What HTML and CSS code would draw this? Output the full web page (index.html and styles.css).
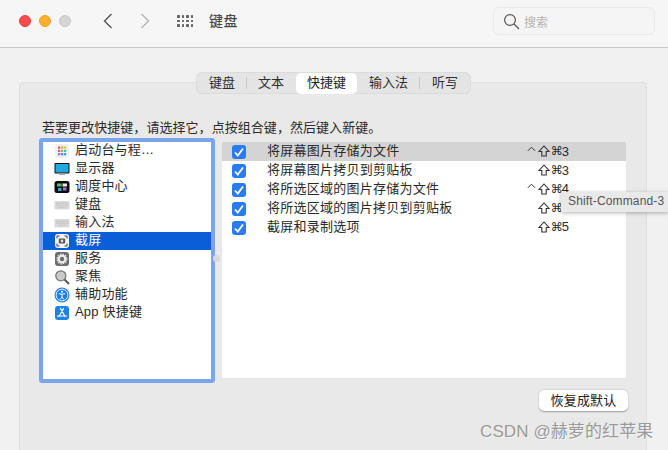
FILE: index.html
```html
<!DOCTYPE html>
<html lang="zh">
<head>
<meta charset="utf-8">
<title>键盘</title>
<link rel="stylesheet" href="styles.css">
</head>
<body>
<div class="window">
  <header class="titlebar">
    <div class="lights"><i class="light red"></i><i class="light amber"></i><i class="light grey"></i></div>
    <svg class="nav back" viewBox="0 0 12 18"><path d="M9.500 2 2.500 9l7 7"/></svg>
    <svg class="nav forward" viewBox="0 0 12 18"><path d="M2.500 2l7 7-7 7"/></svg>
    <div class="grid-btn"><i></i><i></i><i></i><i></i><i></i><i></i><i></i><i></i><i></i><i></i><i></i><i></i></div>
    <div class="title">键盘</div>
    <div class="search">
      <svg viewBox="0 0 17 17"><circle cx="7" cy="7" r="5.400"/><path d="M11 11l5 5"/></svg>
      <span>搜索</span>
    </div>
  </header>
  <main class="content">
    <nav class="tabs">
      <span class="tab first">键盘</span><i class="sep"></i>
      <span class="tab second">文本</span>
      <span class="tab active">快捷键</span>
      <span class="tab fourth">输入法</span><i class="sep"></i>
      <span class="tab">听写</span>
    </nav>
    <section class="panel">
      <p class="hint">若要更改快捷键，请选择它，点按组合键，然后键入新键。</p>
      <div class="columns">
        <ul class="list">
          <li><svg class="ic" viewBox="0 0 16 16"><rect x="1" y="1" width="14" height="14" rx="3" fill="#f1f0f0"/><rect x="4" y="3.500" width="2.200" height="2.200" fill="#e8504a"/><rect x="7" y="3.500" width="2.200" height="2.200" fill="#f0a33c"/><rect x="10" y="3.500" width="2.200" height="2.200" fill="#e4c23c"/><rect x="4" y="6.800" width="2.200" height="2.200" fill="#e14c8c"/><rect x="7" y="6.800" width="2.200" height="2.200" fill="#7bc04a"/><rect x="10" y="6.800" width="2.200" height="2.200" fill="#48b6d8"/><rect x="4" y="10.100" width="2.200" height="2.200" fill="#a75fc9"/><rect x="7" y="10.100" width="2.200" height="2.200" fill="#4a7fe0"/><rect x="10" y="10.100" width="2.200" height="2.200" fill="#3aa0c8"/></svg><span>启动台与程…</span></li>
          <li><svg class="ic" viewBox="0 0 16 16"><rect x=".5" y="2" width="15" height="10.500" rx="1" fill="#111"/><rect x="1.500" y="3" width="13" height="8.500" fill="#20a9dc"/><rect x="5" y="12.500" width="6" height="1.500" fill="#aaa"/></svg><span>显示器</span></li>
          <li><svg class="ic" viewBox="0 0 16 16"><rect x=".5" y="2" width="15" height="12" rx="2.500" fill="#0c0c0c"/><rect x="3" y="4.500" width="4.500" height="3" fill="#4cc07a"/><rect x="8.500" y="4.500" width="4.500" height="3" fill="#e8e8e8"/><rect x="4" y="9" width="3.500" height="3" fill="#35a8e0"/><rect x="9" y="8.500" width="3.500" height="3" fill="#a070e0"/></svg><span>调度中心</span></li>
          <li><svg class="ic" viewBox="0 0 16 16"><rect x=".5" y="4" width="15" height="8.500" rx="1" fill="#d9d9d9"/><path d="M2 6.200h12M2 8.200h12M4 10.300h8" stroke="#bdbdbd" stroke-width="1" stroke-dasharray="1.200 .6"/></svg><span>键盘</span></li>
          <li><svg class="ic" viewBox="0 0 16 16"><rect x=".5" y="4" width="15" height="8.500" rx="1" fill="#d9d9d9"/><path d="M2 6.200h12M2 8.200h12M4 10.300h8" stroke="#bdbdbd" stroke-width="1" stroke-dasharray="1.200 .6"/></svg><span>输入法</span></li>
          <li class="selected"><svg class="ic" viewBox="0 0 16 16"><rect x="1" y="1" width="14" height="14" rx="3" fill="#f4f4f4"/><path d="M3 5.500V3h2.500M10.500 3H13v2.500M13 10.500V13h-2.500M5.500 13H3v-2.500" fill="none" stroke="#444" stroke-width="1"/><rect x="4.800" y="5.500" width="6.400" height="5" rx="1" fill="#555"/><circle cx="8" cy="8" r="1.400" fill="#ddd"/></svg><span>截屏</span></li>
          <li><svg class="ic" viewBox="0 0 16 16"><rect x="1" y="1" width="14" height="14" rx="3" fill="#6c6c6c"/><circle cx="8" cy="8" r="3.200" fill="none" stroke="#eee" stroke-width="2"/><circle cx="8" cy="8" r="4.800" fill="none" stroke="#eee" stroke-width="1.300" stroke-dasharray="1.500 1"/></svg><span>服务</span></li>
          <li><svg class="ic" viewBox="0 0 16 16"><circle cx="6.800" cy="6.800" r="5" fill="#c9c9c9" stroke="#777" stroke-width="1.300"/><path d="M10.500 10.500l4.500 4.500" stroke="#555" stroke-width="2"/></svg><span>聚焦</span></li>
          <li><svg class="ic" viewBox="0 0 16 16"><circle cx="8" cy="8" r="7.500" fill="#1a7fe8"/><circle cx="8" cy="8" r="5.900" fill="none" stroke="#fff" stroke-width=".9"/><circle cx="8" cy="4.800" r="1" fill="#fff"/><path d="M4.800 6.600 8 7.300l3.200-.7M8 7.300v2.500l-1.700 2.600M8 9.800l1.700 2.600" fill="none" stroke="#fff" stroke-width="1"/></svg><span>辅助功能</span></li>
          <li><svg class="ic" viewBox="0 0 16 16"><rect x="1" y="1" width="14" height="14" rx="3" fill="#1c82e6"/><path d="M9.500 3.500 5 11.500M6.500 3.500l4.500 8M3.500 11h9" fill="none" stroke="#fff" stroke-width="1.200" stroke-linecap="round"/></svg><span>App 快捷键</span></li>
        </ul>
        <i class="splitter"></i>
        <div class="table">
          <div class="row current"><i class="check"><svg viewBox="0 0 14 14"><path d="M3 7.500l2.800 3L11 3.500"/></svg></i><span class="name">将屏幕图片存储为文件</span><span class="keys"><svg class="caret" viewBox="0 0 10 6"><path d="M1 5l4-4 4 4"/></svg><svg class="shift" viewBox="0 0 12 12"><path d="M6 1 1 6.500h2.800V11h4.400V6.500H11z"/></svg><span>⌘</span><span class="digit">3</span></span></div>
          <div class="row"><i class="check"><svg viewBox="0 0 14 14"><path d="M3 7.500l2.800 3L11 3.500"/></svg></i><span class="name">将屏幕图片拷贝到剪贴板</span><span class="keys"><svg class="shift" viewBox="0 0 12 12"><path d="M6 1 1 6.500h2.800V11h4.400V6.500H11z"/></svg><span>⌘</span><span class="digit">3</span></span></div>
          <div class="row"><i class="check"><svg viewBox="0 0 14 14"><path d="M3 7.500l2.800 3L11 3.500"/></svg></i><span class="name">将所选区域的图片存储为文件</span><span class="keys"><svg class="caret" viewBox="0 0 10 6"><path d="M1 5l4-4 4 4"/></svg><svg class="shift" viewBox="0 0 12 12"><path d="M6 1 1 6.500h2.800V11h4.400V6.500H11z"/></svg><span>⌘</span><span class="digit">4</span></span></div>
          <div class="row"><i class="check"><svg viewBox="0 0 14 14"><path d="M3 7.500l2.800 3L11 3.500"/></svg></i><span class="name">将所选区域的图片拷贝到剪贴板</span><span class="keys"><svg class="shift" viewBox="0 0 12 12"><path d="M6 1 1 6.500h2.800V11h4.400V6.500H11z"/></svg><span>⌘</span><span class="digit">4</span></span></div>
          <div class="row"><i class="check"><svg viewBox="0 0 14 14"><path d="M3 7.500l2.800 3L11 3.500"/></svg></i><span class="name">截屏和录制选项</span><span class="keys"><svg class="shift" viewBox="0 0 12 12"><path d="M6 1 1 6.500h2.800V11h4.400V6.500H11z"/></svg><span>⌘</span><span class="digit">5</span></span></div>
        </div>
      </div>
      <div class="actions"><button class="btn">恢复成默认</button></div>
    </section>
  </main>
  <div class="tooltip">Shift-Command-3</div>
  <div class="watermark">CSDN @赫萝的红苹果</div>
</div>
</body>
</html>
```
FILE: styles.css
```css
* { box-sizing: border-box; }
html, body { margin: 0; padding: 0; height: 100%; }
body { font-family: "Liberation Sans", "Noto Sans CJK SC", sans-serif; color: #2a2a2a; background: #f1f1f1; overflow: hidden; }
i { display: block; font-style: normal; }
.window { position: relative; width: 668px; height: 450px; display: flex; flex-direction: column; overflow: hidden; }

.titlebar { height: 48px; flex: none; display: flex; align-items: center; background: #f6f6f6; border-bottom: 1px solid #c9c9c9; padding-left: 19px; padding-right: 13px; }
.lights { display: flex; gap: 8px; margin-top: -5px; }
.light { width: 12px; height: 12px; border-radius: 50%; }
.red { background: #fc4a4a; border: 1px solid #e5403f; }
.amber { background: #fdb02e; border: 1px solid #e6a128; }
.grey { background: #d5d5d5; border: 1px solid #c6c6c6; }
.nav { width: 12px; height: 18px; fill: none; stroke-width: 1.4px; margin-top: -5px; }
.back { stroke: #555; margin-left: 31px; }
.forward { stroke: #b5b5b5; margin-left: 25px; }
.grid-btn { display: grid; grid-template-columns: repeat(4, 2.5px); grid-auto-rows: 2.5px; gap: 2.2px 2px; margin-left: 26px; margin-top: -5px; }
.grid-btn i { background: #666; border-radius: 0.5px; }
.title { font-size: 14px; font-weight: 500; letter-spacing: 0.5px; color: #4a4a4a; margin-left: 16px; margin-top: -6px; padding-bottom: 1px; }
.search { margin-left: auto; width: 162px; height: 28px; margin-top: -5px; border: 1px solid #e9e9e9; border-radius: 6px; background: #f5f5f5; display: flex; align-items: center; padding-left: 9px; gap: 4px; }
.search svg { width: 17px; height: 17px; fill: none; stroke: #555; stroke-width: 1.2px; }
.search span { font-size: 12px; color: #b4b4b4; }

.content { flex: 1; min-height: 0; display: flex; flex-direction: column; padding-top: 24px; padding-left: 19px; padding-right: 21px; }
.tabs { align-self: flex-start; margin-left: 177px; height: 22px; flex: none; display: flex; align-items: center; background: #e4e4e4; border: 1px solid #dcdcdc; border-radius: 6px; position: relative; z-index: 1; }
.tab { font-size: 13px; line-height: 20px; padding: 0 12px; color: #2f2f2f; }
.tab.first { padding-right: 11px; }
.tab.second { padding-left: 11px; }
.tab.fourth { padding-right: 11px; }
.tab.active { background: #fff; height: 21px; border-radius: 5px; color: #222; padding: 0 11px; }
.sep { width: 1px; height: 12px; background: #c8c8c8; }

.panel { flex: 1; margin-top: -12px; background: #e9e9e9; border: 1px solid #dfdfdf; border-bottom: 0; border-radius: 4px 4px 0 0; padding: 34px 19px 0; }
.hint { margin: 0 0 0 3px; font-size: 13px; line-height: 21px; height: 21px; letter-spacing: 0.05px; color: #2b2b2b; white-space: nowrap; }
.columns { display: flex; align-items: flex-start; }
.list { list-style: none; margin: 0; padding: 0; width: 176px; height: 245px; background: #fff; border: 4px solid #7aa5ec; border-radius: 3px; flex: none; }
.list li { height: 18px; display: flex; align-items: center; padding-left: 11px; font-size: 13px; color: #2a2a2a; letter-spacing: 0.2px; }
.list li span { padding-bottom: 2px; line-height: 18px; }
.list li .ic { width: 16px; height: 16px; flex: none; margin-right: 5px; }
.list li.selected { background: #0a5fd8; color: #fff; }
.splitter { width: 7px; height: 7px; border-radius: 50%; background: #dadada; margin-top: 117px; margin-left: -2px; margin-right: 2px; flex: none; }
.table { width: 404px; height: 237px; margin-top: 4px; background: #fff; flex: none; border-bottom: 1px solid #e4e4e4; }
.row { height: 18.8px; display: flex; align-items: center; padding-left: 10px; font-size: 13px; letter-spacing: 0.25px; color: #2a2a2a; }
.row.current { background: #d4d4d4; }
.check { width: 14px; height: 14px; border-radius: 3px; background: #2a7bf0; flex: none; margin-top: 2px; }
.check svg { display: block; width: 14px; height: 14px; fill: none; stroke: #fff; stroke-width: 1.8px; }
.name { margin-left: 21px; white-space: nowrap; padding-bottom: 3px; }
.keys { margin-left: auto; margin-right: 57px; display: flex; align-items: center; justify-content: flex-end; font-family: "DejaVu Sans", sans-serif; font-size: 12px; letter-spacing: 0; white-space: nowrap; color: #2a2a2a; }
.caret { width: 9px; height: 6px; margin-right: 2px; margin-bottom: 5px; fill: none; stroke: #333; stroke-width: 1.1px; }
.shift { width: 12px; height: 12px; margin-right: 1px; fill: none; stroke: #333; stroke-width: 1.1px; }
.digit { font-family: "Liberation Sans", sans-serif; font-size: 13px; margin-left: -1px; }

.actions { display: flex; justify-content: flex-end; margin-top: 7px; margin-right: -1px; }
.btn { width: 89px; height: 21px; padding: 0 0 2px; background: #fff; border: 0; border-radius: 5px; box-shadow: 0 0.5px 1.5px rgba(0,0,0,.35); font-family: inherit; font-size: 13px; letter-spacing: 0.2px; color: #222; }

.tooltip { position: absolute; left: 561px; top: 192px; width: 107px; height: 20px; background: #e9e9e9; box-shadow: 0 1px 4px rgba(0,0,0,.3); font-size: 12px; line-height: 19px; padding-left: 7px; letter-spacing: 0.15px; color: #555; white-space: nowrap; }
.watermark { position: absolute; left: 480px; top: 420px; font-size: 17px; line-height: 24px; color: #9a9a9a; white-space: nowrap; letter-spacing: 0.1px; text-shadow: 1px 1px 0 rgba(255,255,255,.5); }
```
